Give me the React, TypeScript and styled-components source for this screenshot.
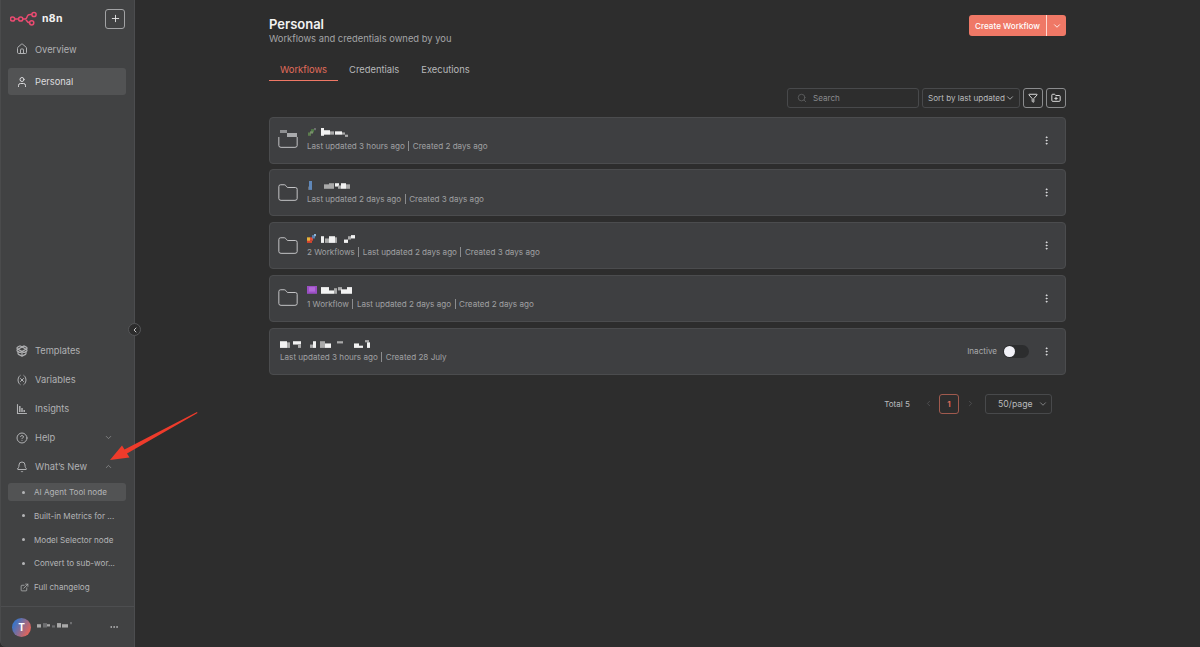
import React from "react";
import styled, { createGlobalStyle } from "styled-components";
import {
  Bell,
  ChevronDown,
  ChevronLeft,
  ChevronRight,
  ChevronUp,
  CircleHelp,
  Ellipsis,
  EllipsisVertical,
  ExternalLink,
  Folder,
  FolderPlus,
  Funnel,
  House,
  PackageOpen,
  Plus,
  Search,
  User,
  Variable,
} from "lucide-react";

const GlobalStyle = createGlobalStyle`
  html, body { margin: 0; padding: 0; height: 100%; background: #2d2d2d; overflow: hidden; }
  * { box-sizing: border-box; }
  body { font-family: Inter, "Liberation Sans", sans-serif; }
`;

// blurred-out names in the screenshot: [x, y, w, h, colour]
type Cell = [number, number, number, number, string];

const W = "#f2f2f2";
const G = "#a9a9a9";
const D = "#6d6e70";

const names: Record<string, { w: number; cells: Cell[] }> = {
  a: {
    w: 46,
    cells: [
      [1, 4, 3, 3, "#5d7d4e"], [4, 1, 3, 3, "#4f7a45"], [3, 3, 3, 2, "#7a8f6d"], [7, 0, 2, 2, D],
      [14, 0, 3, 7, W], [17, 2, 6, 4, W], [23, 3, 4, 3, G], [28, 3, 7, 3, W], [35, 4, 3, 2, G], [38, 6, 3, 2, G],
    ],
  },
  b: {
    w: 52,
    cells: [
      [2, 0, 3, 8, "#5f87b8"], [1, 5, 1, 3, D],
      [17, 3, 5, 4, G], [22, 2, 5, 5, G], [28, 2, 4, 3, W], [31, 4, 3, 3, G], [34, 2, 5, 5, W], [39, 3, 4, 4, G],
    ],
  },
  c: {
    w: 52,
    cells: [
      [0, 3, 3, 4, "#e8b23a"], [3, 3, 3, 3, "#e24b35"], [0, 6, 5, 2, "#d8452e"], [5, 1, 3, 3, "#5c7fae"], [7, 0, 2, 2, "#8bb6d8"],
      [14, 2, 3, 6, W], [18, 4, 4, 4, G], [22, 2, 6, 6, W], [28, 3, 2, 5, G], [37, 5, 4, 3, W], [41, 2, 3, 3, G], [44, 1, 4, 3, W],
    ],
  },
  d: {
    w: 52,
    cells: [
      [0, 0, 10, 7, "#9b4fc4"], [2, 1, 6, 4, "#b268d8"],
      [14, 1, 8, 6, W], [22, 4, 5, 3, W], [27, 2, 3, 5, G], [31, 1, 4, 3, G], [34, 3, 6, 4, W], [40, 1, 5, 6, W],
    ],
  },
  e: {
    w: 92,
    cells: [
      [0, 2, 7, 6, W], [7, 3, 3, 5, G], [13, 2, 8, 3, W], [18, 5, 3, 3, G], [30, 5, 3, 3, G], [33, 2, 3, 6, W],
      [40, 2, 5, 6, G], [45, 4, 6, 4, W], [57, 2, 6, 2, G], [74, 4, 5, 4, W], [79, 6, 4, 2, W], [85, 1, 4, 2, G], [87, 3, 3, 5, W],
    ],
  },
  user: {
    w: 38,
    cells: [
      [0, 2, 4, 3, G], [6, 1, 4, 4, D], [10, 2, 3, 2, G], [15, 3, 3, 2, D], [20, 1, 4, 4, G], [25, 2, 6, 3, G], [33, 0, 2, 2, D],
    ],
  },
};

const BlurSvg = styled.svg`
  filter: blur(0.4px);
`;

function Redacted({ name }: { name: string }) {
  const { w, cells } = names[name];
  return (
    <BlurSvg width={w} height={10} viewBox={`0 0 ${w} 9`} preserveAspectRatio="none" aria-hidden>
      {cells.map(([x, y, cw, ch, c], i) => (
        <rect key={i} x={x} y={y} width={cw} height={ch} fill={c} />
      ))}
    </BlurSvg>
  );
}

function Logo() {
  return (
    <svg width="28" height="18" viewBox="0 0 28 18" fill="none" stroke="#ea4b71" strokeWidth="1.5" aria-hidden>
      <circle cx="2.6" cy="9" r="2.1" />
      <circle cx="10.7" cy="9" r="2.1" />
      <circle cx="24" cy="4.5" r="2.1" />
      <circle cx="21.7" cy="12.8" r="2.1" />
      <path d="M4.7 9h3.9M12.8 9h2c2 0 2-1.5 2.5-2.8.5-1.4 1.4-1.8 3-1.8h1.6M14.8 9c2 0 1.7 3.8 4.8 3.8" />
    </svg>
  );
}

function InsightsIcon() {
  return (
    <svg width="12" height="12" viewBox="0 0 12 12" fill="none" stroke="currentColor" aria-hidden>
      <path d="M1.5 1.5v9h9" strokeWidth="1.1" strokeLinecap="round" />
      <path d="M3.8 3v6M6 5v4M8.2 7v2" strokeWidth="1.5" />
    </svg>
  );
}

export default function App() {
  return (
    <Page>
      <GlobalStyle />
      <Sidebar>
        <LogoRow>
          <Brand>
            <Logo />
            <BrandName>n8n</BrandName>
          </Brand>
          <AddButton>
            <Plus size={11} />
          </AddButton>
        </LogoRow>
        <TopNav>
          <NavItem>
            <House size={12} />
            Overview
          </NavItem>
          <NavItem $active>
            <User size={12} />
            Personal
          </NavItem>
        </TopNav>
        <CollapseButton>
          <ChevronLeft size={8} strokeWidth={3} />
        </CollapseButton>
        <BottomNav>
          <PlainItem>
            <PackageOpen size={12} strokeWidth={2.4} />
            Templates
          </PlainItem>
          <PlainItem>
            <Variable size={12} />
            Variables
          </PlainItem>
          <PlainItem>
            <InsightsIcon />
            Insights
          </PlainItem>
          <PlainItem>
            <CircleHelp size={12} />
            Help
            <Caret>
              <ChevronDown size={9} />
            </Caret>
          </PlainItem>
          <PlainItem>
            <Bell size={12} />
            What’s New
            <Caret>
              <ChevronUp size={9} />
            </Caret>
          </PlainItem>
        </BottomNav>
        <SubNav>
          <SubItem $active><Dot />AI Agent Tool node</SubItem>
          <SubItem><Dot />Built-in Metrics for ...</SubItem>
          <SubItem><Dot />Model Selector node</SubItem>
          <SubItem><Dot />Convert to sub-wor...</SubItem>
          <SubItem><LinkIcon size={9} />Full changelog</SubItem>
        </SubNav>
        <UserRow>
          <Avatar>T</Avatar>
          <Redacted name="user" />
          <UserMenu>
            <Ellipsis size={10} />
          </UserMenu>
        </UserRow>
      </Sidebar>

      <Main>
        <Header>
          <div>
            <Title>Personal</Title>
            <Subtitle>Workflows and credentials owned by you</Subtitle>
          </div>
          <CreateGroup>
            <CreateLabel>Create Workflow</CreateLabel>
            <CreateCaret>
              <ChevronDown size={10} />
            </CreateCaret>
          </CreateGroup>
        </Header>

        <Tabs>
          <Tab $active>Workflows</Tab>
          <Tab>Credentials</Tab>
          <Tab>Executions</Tab>
        </Tabs>

        <Toolbar>
          <SearchBox>
            <Search size={10} />
            Search
          </SearchBox>
          <SortBox>
            Sort by last updated
            <ChevronDown size={10} />
          </SortBox>
          <IconButton>
            <Funnel size={10} strokeWidth={2.4} />
          </IconButton>
          <IconButton>
            <FolderPlus size={10} strokeWidth={2.4} />
          </IconButton>
        </Toolbar>

        <List>
          <Card>
            <FolderMark>
              <Folder size={22} strokeWidth={1.05} />
              <FolderBlur />
            </FolderMark>
            <CardText>
              <Redacted name="a" />
              <Meta>Last updated 3 hours ago<Sep />Created 2 days ago</Meta>
            </CardText>
            <MoreIcon size={11} />
          </Card>
          <Card>
            <FolderMark>
              <Folder size={22} strokeWidth={1.05} />
            </FolderMark>
            <CardText>
              <Redacted name="b" />
              <Meta>Last updated 2 days ago<Sep />Created 3 days ago</Meta>
            </CardText>
            <MoreIcon size={11} />
          </Card>
          <Card>
            <FolderMark>
              <Folder size={22} strokeWidth={1.05} />
            </FolderMark>
            <CardText>
              <Redacted name="c" />
              <Meta>2 Workflows<Sep />Last updated 2 days ago<Sep />Created 3 days ago</Meta>
            </CardText>
            <MoreIcon size={11} />
          </Card>
          <Card>
            <FolderMark>
              <Folder size={22} strokeWidth={1.05} />
            </FolderMark>
            <CardText>
              <Redacted name="d" />
              <Meta>1 Workflow<Sep />Last updated 2 days ago<Sep />Created 2 days ago</Meta>
            </CardText>
            <MoreIcon size={11} />
          </Card>
          <Card>
            <CardText>
              <Redacted name="e" />
              <Meta>Last updated 3 hours ago<Sep />Created 28 July</Meta>
            </CardText>
            <StatusLabel>Inactive</StatusLabel>
            <Toggle>
              <Knob />
            </Toggle>
            <MoreIcon size={11} />
          </Card>
        </List>

        <Pagination>
          <Total>Total 5</Total>
          <PageArrow><ChevronLeft size={9} /></PageArrow>
          <PageNumber>1</PageNumber>
          <PageArrow><ChevronRight size={9} /></PageArrow>
          <PageSize>
            50/page
            <ChevronDown size={10} />
          </PageSize>
        </Pagination>
      </Main>

      <Annotation width="100" height="62" viewBox="0 0 100 62" aria-hidden>
        <path d="M90 2 L17.5 39.5 L15 35.5 L3 50 L22.5 47.5 L20 43.5 L90.5 3 Z" fill="#ee3b2b" />
      </Annotation>
    </Page>
  );
}

const Page = styled.div`
  position: relative;
  display: flex;
  width: 100%;
  height: 647px;
  background: #2d2d2d;
  color: #d4d4d6;
  overflow: hidden;
`;

const Sidebar = styled.aside`
  position: relative;
  flex: 0 0 135px;
  display: flex;
  flex-direction: column;
  height: 100%;
  background: #414243;
  border-right: 1px solid #4c4d4f;
  border-left: 1px solid #4a4b4c;
  border-bottom-left-radius: 6px;
`;

const LogoRow = styled.div`
  display: flex;
  align-items: center;
  justify-content: space-between;
  height: 35px;
  margin-top: 1px;
  padding: 0 9px 0 9px;
`;

const Brand = styled.div`
  display: flex;
  align-items: center;
  gap: 4px;
`;

const BrandName = styled.span`
  font-size: 10.5px;
  font-weight: 700;
  color: #f1f1f1;
  letter-spacing: 0.3px;
`;

const AddButton = styled.button`
  display: flex;
  align-items: center;
  justify-content: center;
  width: 20px;
  height: 20px;
  padding: 0;
  background: transparent;
  border: 1px solid #a2a3a5;
  border-radius: 3px;
  color: #e6e6e6;
`;

const TopNav = styled.nav`
  display: flex;
  flex-direction: column;
  gap: 4px;
  margin-top: -1px;
  padding: 0 8px 0 7px;
`;

const NavItem = styled.div<{ $active?: boolean }>`
  display: flex;
  align-items: center;
  gap: 7px;
  height: ${({ $active }) => ($active ? "27px" : "28px")};
  margin-bottom: ${({ $active }) => ($active ? "0" : "1px")};
  padding-left: 8px;
  border-radius: 3px;
  font-size: 9.3px;
  white-space: nowrap;
  color: ${({ $active }) => ($active ? "#dcdcde" : "#b0b1b3")};
  background: ${({ $active }) => ($active ? "#525354" : "transparent")};
`;

const CollapseButton = styled.button`
  position: absolute;
  top: 323px;
  right: -7px;
  display: flex;
  align-items: center;
  justify-content: center;
  width: 13px;
  height: 13px;
  padding: 0;
  border-radius: 50%;
  border: 1px solid #555658;
  background: #2d2d2d;
  color: #c8c8c8;
`;

const BottomNav = styled.nav`
  display: flex;
  flex-direction: column;
  margin-top: auto;
  padding: 0 8px 0 7px;
`;

const PlainItem = styled.div`
  display: flex;
  align-items: center;
  gap: 7px;
  height: 29px;
  padding-left: 8px;
  font-size: 9.3px;
  white-space: nowrap;
  color: #b0b1b3;
`;

const Caret = styled.span`
  display: flex;
  margin-left: auto;
  margin-right: 13px;
  color: #8f9092;
`;

const SubNav = styled.div`
  display: flex;
  flex-direction: column;
  gap: 5.7px;
  margin-top: 2px;
  padding: 0 8px 0 7px;
`;

const SubItem = styled.div<{ $active?: boolean }>`
  display: flex;
  align-items: center;
  height: 18px;
  padding-left: 11px;
  border-radius: 3px;
  font-size: 8.1px;
  white-space: nowrap;
  color: #b4b5b7;
  background: ${({ $active }) => ($active ? "#525354" : "transparent")};
`;

const Dot = styled.span`
  flex: 0 0 auto;
  width: 3px;
  height: 3px;
  margin: 0 9px 0 3px;
  border-radius: 50%;
  background: #b4b5b7;
`;

const LinkIcon = styled(ExternalLink)`
  margin: 0 5px 0 1px;
  flex: 0 0 auto;
`;

const UserRow = styled.div`
  display: flex;
  align-items: center;
  gap: 6px;
  height: 41px;
  margin-top: 10px;
  padding: 0 7px 0 11px;
  border-top: 1px solid #4d4e50;
`;

const Avatar = styled.div`
  display: flex;
  align-items: center;
  justify-content: center;
  width: 19px;
  height: 19px;
  border-radius: 50%;
  background: linear-gradient(120deg, #3f74c4 20%, #d9655f 80%);
  color: #fff;
  font-size: 10px;
  font-weight: 700;
`;

const UserMenu = styled.span`
  display: flex;
  margin-left: auto;
  margin-right: 8px;
  color: #c0c0c2;
`;

const Main = styled.main`
  flex: 1;
  min-width: 0;
  padding: 0 134px;
`;

const Header = styled.header`
  display: flex;
  align-items: flex-start;
  justify-content: space-between;
  padding-top: 15px;
`;

const Title = styled.h1`
  margin: 1px 0 0;
  font-size: 13px;
  line-height: 16px;
  font-weight: 600;
  color: #f2f2f2;
`;

const Subtitle = styled.p`
  margin: 0;
  font-size: 9.4px;
  line-height: 13px;
  color: #a3a4a6;
`;

const CreateGroup = styled.div`
  display: flex;
  height: 21px;
  border-radius: 3px;
  overflow: hidden;
  background: #ef7866;
  color: #fff;
`;

const CreateLabel = styled.span`
  display: flex;
  align-items: center;
  padding: 0 6px;
  font-size: 8.1px;
  font-weight: 500;
  white-space: nowrap;
`;

const CreateCaret = styled.span`
  display: flex;
  align-items: center;
  justify-content: center;
  width: 20px;
  border-left: 1px solid #ffd9d2;
`;

const Tabs = styled.div`
  display: flex;
  gap: 11px;
  margin-top: 15px;
`;

const Tab = styled.div<{ $active?: boolean }>`
  height: 21px;
  padding: 0 ${({ $active }) => ($active ? "11px" : "0")};
  margin-right: ${({ $active }) => ($active ? "0" : "11px")};
  font-size: 9.4px;
  line-height: 19px;
  color: ${({ $active }) => ($active ? "#e06c5b" : "#b7b8ba")};
  border-bottom: ${({ $active }) => ($active ? "1px solid #ef7866" : "none")};
`;

const Toolbar = styled.div`
  display: flex;
  justify-content: flex-end;
  gap: 3px;
  margin-top: 7px;
`;

const Control = styled.div`
  display: flex;
  align-items: center;
  height: 20px;
  border: 1px solid #48494b;
  border-radius: 3px;
  font-size: 8.1px;
  white-space: nowrap;
`;

const SearchBox = styled(Control)`
  width: 132px;
  gap: 6px;
  padding-left: 9px;
  color: #8a8b8d;
  svg { color: #5f6062; }
`;

const SortBox = styled(Control)`
  width: 98px;
  justify-content: space-between;
  padding: 0 4px 0 5px;
  color: #b9babc;
`;

const IconButton = styled(Control)`
  justify-content: center;
  width: 20px;
  border-color: #8b8c8e;
  color: #dcdcdc;
`;

const List = styled.div`
  display: flex;
  flex-direction: column;
  gap: 5.8px;
  margin-top: 8.6px;
`;

const Card = styled.article`
  display: flex;
  align-items: center;
  height: 47px;
  padding: 0 13px 0 10px;
  background: #3e3f41;
  border: 1px solid #4b4c4e;
  border-radius: 4px;
`;

const FolderMark = styled.div`
  position: relative;
  display: flex;
  flex: 0 0 auto;
  width: 30px;
  margin-left: -3px;
  color: #c9c9cb;
`;

const FolderBlur = styled.span`
  position: absolute;
  top: 0;
  left: 0;
  width: 24px;
  height: 8px;
  background:
    linear-gradient(#8e8f91, #8e8f91) 3px 1px / 7px 3px no-repeat,
    linear-gradient(#a9aaac, #a9aaac) 10px 4px / 10px 4px no-repeat,
    #3e3f41;
`;

const CardText = styled.div`
  display: flex;
  flex-direction: column;
  align-items: flex-start;
  gap: 2px;
  flex: 1;
  min-width: 0;
`;

const Meta = styled.div`
  display: flex;
  align-items: center;
  font-size: 8.1px;
  line-height: 12px;
  color: #a0a1a3;
`;

const Sep = styled.span`
  width: 1px;
  height: 10px;
  margin: 0 3.5px;
  background: #8b8c8e;
`;

const MoreIcon = styled(EllipsisVertical)`
  flex: 0 0 auto;
  color: #e8e8ea;
`;

const StatusLabel = styled.span`
  margin-right: 6px;
  font-size: 8.1px;
  color: #a9aaac;
`;

const Toggle = styled.div`
  display: flex;
  align-items: center;
  width: 26px;
  height: 13px;
  margin-right: 12px;
  padding: 0 1px;
  border-radius: 7px;
  background: #2c2d2e;
`;

const Knob = styled.span`
  width: 11px;
  height: 11px;
  border-radius: 50%;
  background: #f2f2f8;
`;

const Pagination = styled.div`
  display: flex;
  align-items: center;
  justify-content: flex-end;
  margin-top: 19px;
  padding-right: 14px;
`;

const Total = styled.span`
  margin-right: 7px;
  font-size: 8.1px;
  color: #b9babc;
`;

const PageArrow = styled.span`
  display: flex;
  justify-content: center;
  width: 22px;
  color: #555658;
`;

const PageNumber = styled.span`
  display: flex;
  align-items: center;
  justify-content: center;
  width: 20px;
  height: 20px;
  border: 1px solid #a05a4e;
  border-radius: 3px;
  font-size: 8.1px;
  font-weight: 600;
  color: #e06c5b;
`;

const PageSize = styled(Control)`
  width: 67px;
  justify-content: space-between;
  margin-left: 4px;
  padding: 0 3px 0 12px;
  font-size: 8.7px;
  color: #b9babc;
  svg { color: #8f9092; }
`;

const Annotation = styled.svg`
  position: absolute;
  top: 410px;
  left: 107px;
`;
